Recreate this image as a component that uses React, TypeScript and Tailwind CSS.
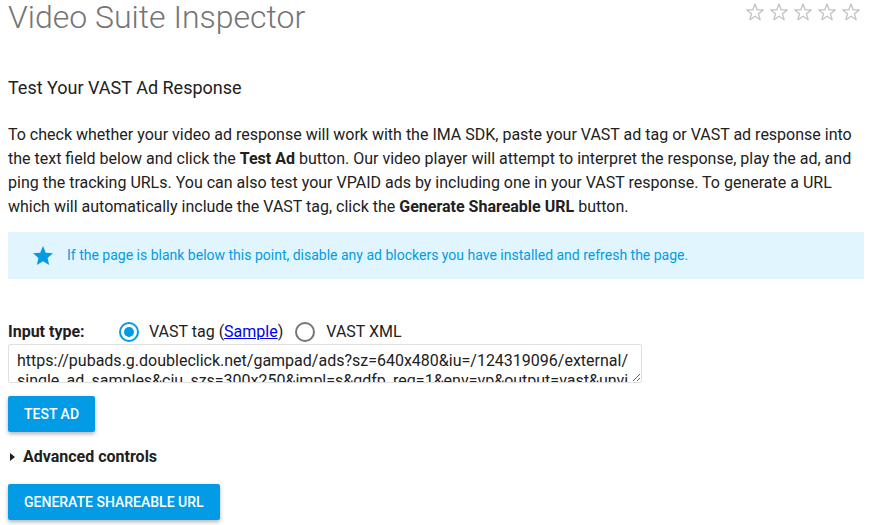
import { useState } from 'react'

// word joiner after "?" keeps the URL from wrapping there
const TAG_URL =
  'https://pubads.g.doubleclick.net/gampad/ads?\u2060sz=640x480&iu=/124319096/external/single_ad_samples&ciu_szs=300x250&impl=s&gdfp_req=1&env=vp&output=vast&unviewed_position_start=1&cust_params=deployment%3Ddevsite%26sample_ct%3Dlinear&correlator='

function StarOutline() {
  return (
    <svg width="20" height="18" viewBox="0 0 20 19" fill="none">
      <polygon
        points="10,1 12.2,7.2 18.8,7.3 13.6,11.3 15.5,17.6 10,13.9 4.5,17.6 6.4,11.3 1.2,7.3 7.8,7.2"
        stroke="#c2c2c2"
        strokeWidth="1.3"
        strokeLinejoin="round"
      />
    </svg>
  )
}

function Radio({ checked, onClick }: { checked: boolean; onClick: () => void }) {
  return (
    <button
      onClick={onClick}
      className={
        'w-5 h-5 rounded-full border-2 flex items-center justify-center shrink-0 ' +
        (checked ? 'border-[#039be5]' : 'border-[#757575]')
      }
    >
      {checked && <span className="w-[10px] h-[10px] rounded-full bg-[#039be5]" />}
    </button>
  )
}

export default function App() {
  const [inputType, setInputType] = useState<'tag' | 'xml'>('tag')

  return (
    <div className="min-h-[525px] bg-white pl-2 pr-[7px] font-['Roboto',sans-serif] text-[#212121]">
      {/* HEADER */}
      <div className="flex items-start justify-between">
        <h1 className="text-[32px] leading-[34px] font-light text-[#757575]">
          Video Suite Inspector
        </h1>
        <div className="flex gap-[4px] pt-[3px] pr-[3px]">
          {[0, 1, 2, 3, 4].map(i => (
            <StarOutline key={i} />
          ))}
        </div>
      </div>

      <h2 className="mt-[42px] text-[18px] leading-6">Test Your VAST Ad Response</h2>

      <p className="mt-[23px] text-[16px] leading-6">
        To check whether your video ad response will work with the IMA SDK, paste your VAST ad tag
        or VAST ad response into the text field below and click the <b>Test Ad</b> button. Our
        video player will attempt to interpret the response, play the ad, and ping the tracking
        URLs. You can also test your VPAID ads by including one in your VAST response. To generate
        a URL which will automatically include the VAST tag, click the{' '}
        <b>Generate Shareable URL</b> button.
      </p>

      {/* NOTICE */}
      <div className="mt-[13px] h-[47px] bg-[#e1f5fe] flex items-center pl-[23px] gap-[12px]">
        <svg width="24" height="24" viewBox="0 0 24 24" fill="#039be5">
          <path d="M12 17.27L18.18 21l-1.64-7.03L22 9.24l-7.19-.61L12 2 9.19 8.63 2 9.24l5.46 4.73L5.82 21z" />
        </svg>
        <span className="text-[14px] text-[#039be5]">
          If the page is blank below this point, disable any ad blockers you have installed and
          refresh the page.
        </span>
      </div>

      {/* INPUT TYPE */}
      <div className="mt-[41px] h-6 flex items-center text-[16px]">
        <span className="w-[111px] font-bold">Input type:</span>
        <Radio checked={inputType === 'tag'} onClick={() => setInputType('tag')} />
        <span className="ml-[10px]">
          VAST tag (<a href="#" className="text-[#0000ee] underline">Sample</a>)
        </span>
        <span className="ml-[12px]">
          <Radio checked={inputType === 'xml'} onClick={() => setInputType('xml')} />
        </span>
        <span className="ml-[11px]">VAST XML</span>
      </div>

      <textarea
        defaultValue={TAG_URL}
        className="block w-[634px] h-[39px] border border-[#e0e0e0] rounded-[2px] px-2 pt-[6px] text-[16px] leading-5 text-[#212121] overflow-hidden outline-none"
      />

      <button className="mt-[13px] h-9 px-4 rounded-[2px] bg-[#039be5] text-white text-[14px] font-medium uppercase shadow-[0_2px_4px_rgba(0,0,0,0.3)]">
        Test Ad
      </button>

      {/* ADVANCED */}
      <div className="mt-[13px] h-6 flex items-center gap-[8px] text-[16px] font-bold">
        <span className="ml-[2px] w-0 h-0 border-y-[4px] border-y-transparent border-l-[5px] border-l-[#212121]" />
        <span>Advanced controls</span>
      </div>

      <button className="mt-[15px] h-9 px-4 rounded-[2px] bg-[#039be5] text-white text-[14px] font-medium uppercase shadow-[0_2px_4px_rgba(0,0,0,0.3)]">
        Generate Shareable URL
      </button>
    </div>
  )
}
